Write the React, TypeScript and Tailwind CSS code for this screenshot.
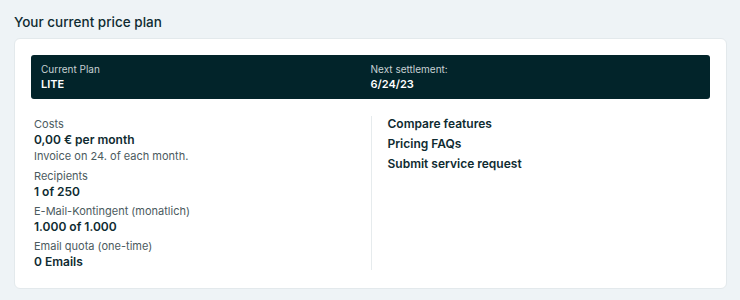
import React from "react";

const font = { fontFamily: "Inter, 'Noto Sans', sans-serif" };

function Group({ label, value, sub }: { label: string; value: string; sub?: string }) {
  return (
    <div className="flex flex-col">
      <div className="text-[11px] leading-4 text-[#4b5a5e]">{label}</div>
      <div className="text-[12px] leading-4 font-semibold text-[#0f2b31]">{value}</div>
      {sub && <div className="text-[11px] leading-[17px] text-[#4b5a5e]">{sub}</div>}
    </div>
  );
}

export default function App() {
  return (
    <div className="min-h-[300px] w-[740px] bg-[#eef3f6] px-[14px] pt-3" style={font}>
      <h1 className="text-[13.5px] leading-5 font-medium text-[#0f2b31] mb-[6px]">Your current price plan</h1>
      <div className="w-[713px] rounded-md border border-[#e3e9ec] bg-white p-4 pb-[18px]">
        <div className="grid grid-cols-2 rounded-[3px] bg-[#02242a] px-[10px] py-[7px]">
          <div className="flex flex-col">
            <span className="text-[10px] leading-[14px] text-[#c7d1d3]">Current Plan</span>
            <span className="text-[11px] leading-4 font-semibold text-white">LITE</span>
          </div>
          <div className="flex flex-col">
            <span className="text-[10px] leading-[14px] text-[#c7d1d3]">Next settlement:</span>
            <span className="text-[11px] leading-4 font-semibold text-white">6/24/23</span>
          </div>
        </div>
        <div className="mt-[17px] grid grid-cols-2 px-[3px]">
          <div className="flex flex-col gap-[3px]">
            <Group label="Costs" value="0,00 € per month" sub="Invoice on 24. of each month." />
            <Group label="Recipients" value="1 of 250" />
            <Group label="E-Mail-Kontingent (monatlich)" value="1.000 of 1.000" />
            <Group label="Email quota (one-time)" value="0 Emails" />
          </div>
          <div className="flex flex-col gap-1 border-l border-[#e6ebed] pl-4">
            <a className="text-[12px] leading-4 font-semibold text-[#0f2b31]">Compare features</a>
            <a className="text-[12px] leading-4 font-semibold text-[#0f2b31]">Pricing FAQs</a>
            <a className="text-[12px] leading-4 font-semibold text-[#0f2b31]">Submit service request</a>
          </div>
        </div>
      </div>
    </div>
  );
}
